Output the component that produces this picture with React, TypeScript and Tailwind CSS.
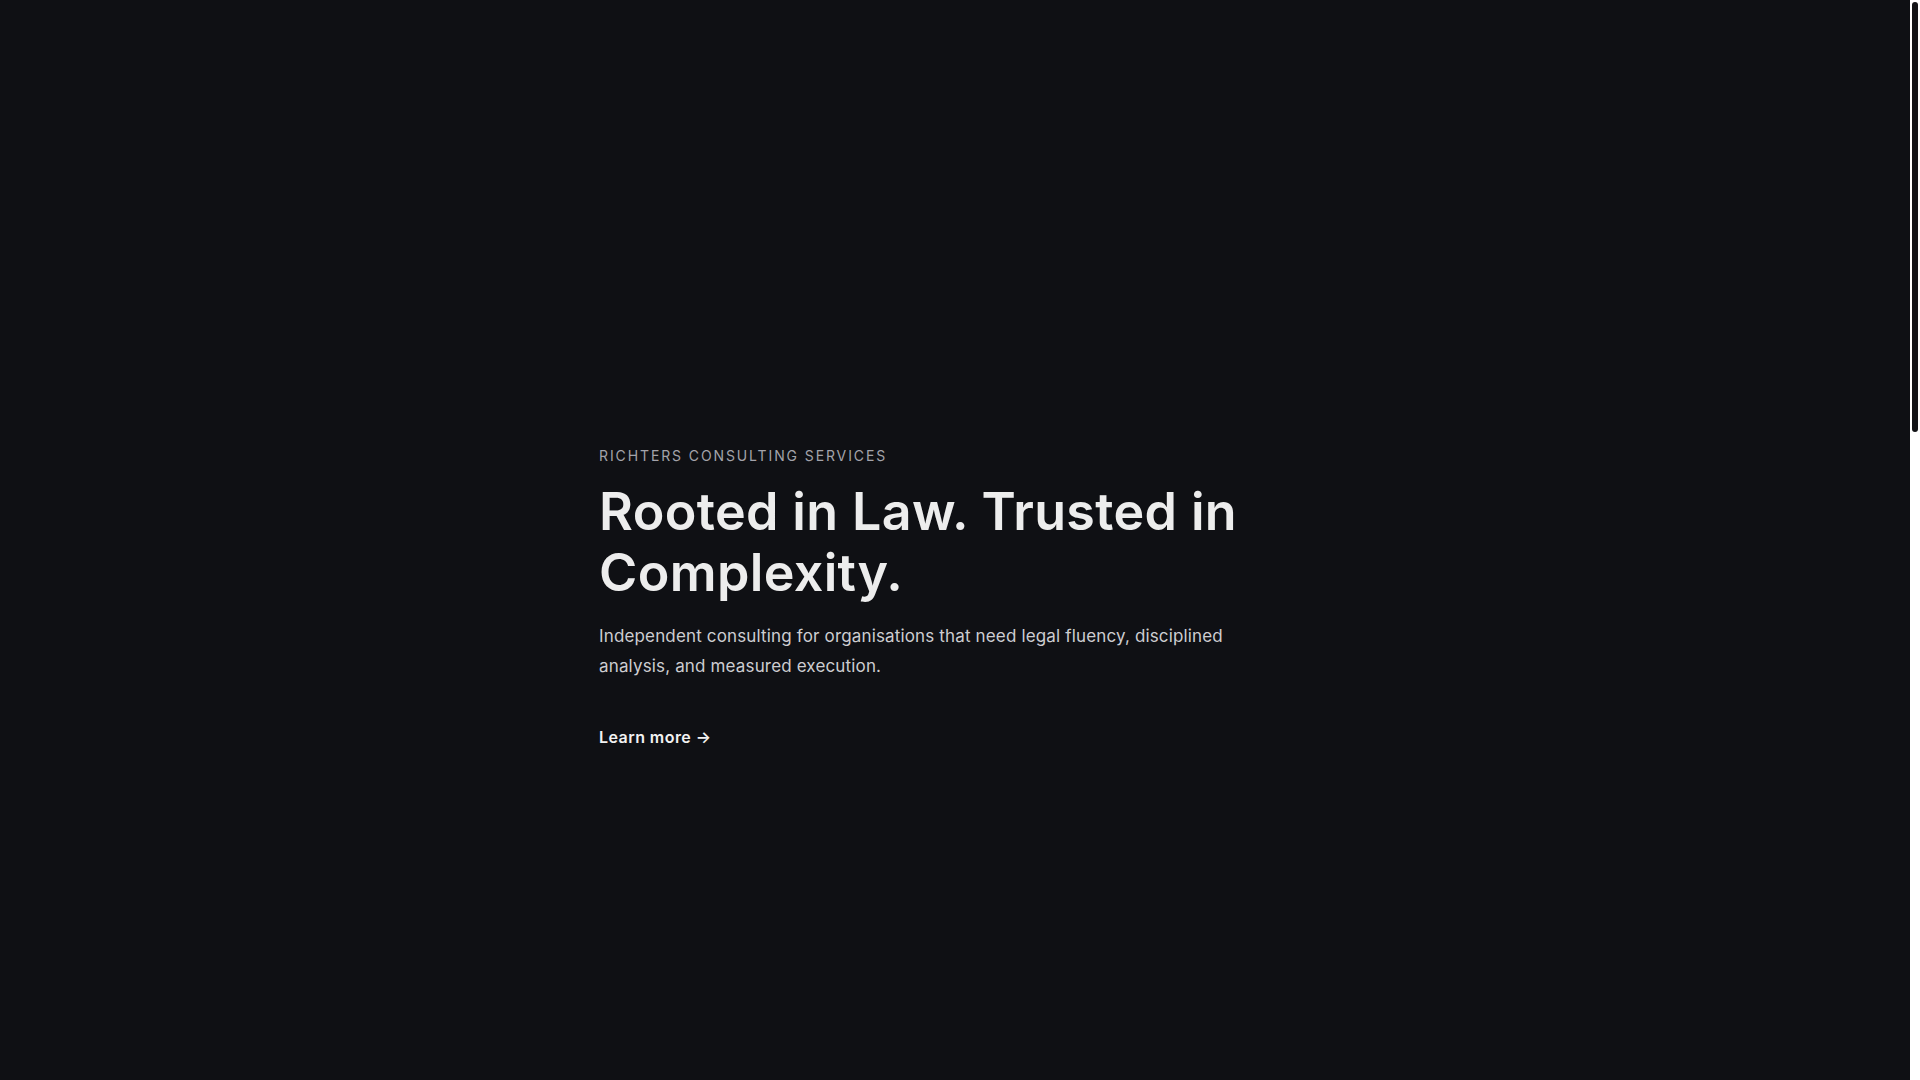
import React from "react";

export default function App() {
  return (
    <div className="flex h-screen w-full overflow-hidden bg-[#0f1014] font-['Inter',sans-serif]">
      <main className="flex-1">
        <section className="w-full">
          <div className="mx-auto w-[712px] pt-[446px]">
            <p className="text-[14px] leading-[20px] tracking-[0.135em] uppercase text-[#a3a3aa]">
              Richters Consulting Services
            </p>
            <h1 className="mt-[15px] text-[52px] leading-[1.18] font-semibold tracking-[0.007em] text-[#ededed]">
              Rooted in Law. Trusted in Complexity.
            </h1>
            <p className="mt-[17px] max-w-[660px] text-[17px] leading-[30px] tracking-[0.009em] text-[#cdcdd1]">
              Independent consulting for organisations that need legal fluency, disciplined analysis, and measured execution.
            </p>
            <a href="#" className="mt-[44px] inline-block text-[16px] leading-[24px] font-semibold tracking-[0.028em] text-[#f2f2f2]">
              Learn more →
            </a>
          </div>
        </section>
      </main>
      <div className="flex w-[10px] shrink-0 flex-col bg-white px-[2px] pt-[2px]">
        <div className="h-[430px] w-full rounded-full bg-[#121316]" />
      </div>
    </div>
  );
}
